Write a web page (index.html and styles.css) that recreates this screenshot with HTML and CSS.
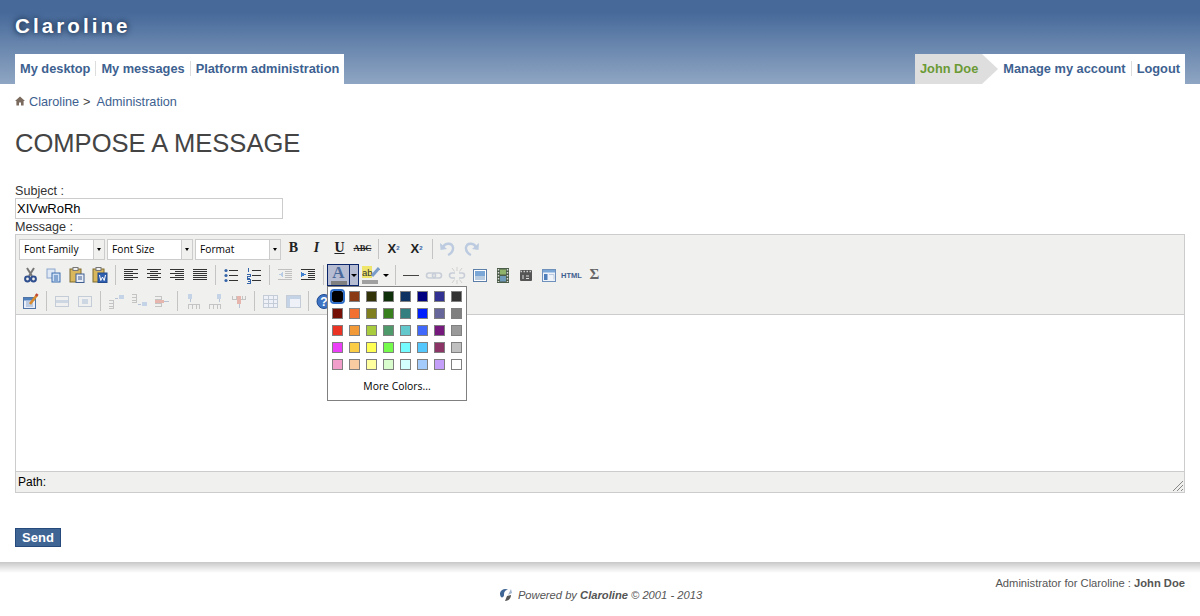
FILE: index.html
```html
<!DOCTYPE html>
<html>
<head>
    <title>Compose a message</title>
    <link rel="stylesheet" href="styles.css">
</head>
<body>
    <div class="header">
        <div class="site-title">Claroline</div>
        <div class="nav">
            <div class="nav-box">
                <a href="#">My desktop</a>
                <a href="#">My messages</a>
                <a href="#">Platform administration</a>
            </div>
            <div class="nav-box user-box">
                <span class="user-name">John Doe</span>
                <a href="#" class="plain">Manage my account</a>
                <a href="#">Logout</a>
            </div>
        </div>
    </div>

    <div class="breadcrumb">
        <svg class="home" width="10" height="10" viewBox="0 0 10 10"><path d="M5 0.5 L10 5 L8.6 5 L8.6 9.5 L6 9.5 L6 6.5 L4 6.5 L4 9.5 L1.4 9.5 L1.4 5 L0 5 Z" fill="#7b6a5e"/></svg>
        <a href="#">Claroline</a><span class="crumb-sep">&gt;</span><a href="#">Administration</a>
    </div>

    <h1>COMPOSE A MESSAGE</h1>

    <form class="message-form">
        <label class="field-label">Subject :</label>
        <input class="subject" type="text" value="XIVwRoRh">
        <label class="field-label">Message :</label>

        <div class="editor">
            <div class="toolbar">
                <div class="row">
                    <div class="select">Font Family<span class="arrow"></span></div>
                    <div class="select">Font Size<span class="arrow"></span></div>
                    <div class="select select-last">Format<span class="arrow"></span></div>
                    <span class="btn txt bold">B</span>
                    <span class="btn txt italic">I</span>
                    <span class="btn txt under">U</span>
                    <span class="btn txt strike">ABC</span>
                    <span class="sep"></span>
                    <span class="btn txt script">X<sub>2</sub></span>
                    <span class="btn txt script">X<sup>2</sup></span>
                    <span class="sep"></span>
                    <span class="btn"><svg width="20" height="20" viewBox="0 0 20 20"><path d="M5 9 C6 4 14 3 15 8.5 C15.5 12 12.5 15 10 16" fill="none" stroke="#bccbe0" stroke-width="2.4"/><path d="M2 4 L2.5 11 L9 10 Z" fill="#bccbe0"/></svg></span>
                    <span class="btn"><svg width="20" height="20" viewBox="0 0 20 20"><path d="M15 9 C14 4 6 3 5 8.5 C4.5 12 7.5 15 10 16" fill="none" stroke="#bccbe0" stroke-width="2.4"/><path d="M18 4 L17.5 11 L11 10 Z" fill="#bccbe0"/></svg></span>
                </div>

                <div class="row">
                    <span class="btn"><svg width="20" height="20" viewBox="0 0 20 20"><path d="M6 3 L11 11 M13 3 L8 11" stroke="#777" stroke-width="2" fill="none"/><circle cx="6.5" cy="14" r="2.4" fill="none" stroke="#2f4f8f" stroke-width="2"/><circle cx="12.5" cy="14" r="2.4" fill="none" stroke="#2f4f8f" stroke-width="2"/></svg></span>
                    <span class="btn"><svg width="20" height="20" viewBox="0 0 20 20"><rect x="3" y="4" width="8" height="9" fill="#dfe8f5" stroke="#8ba6cc"/><rect x="8" y="8" width="8" height="9" fill="#cfe0f5" stroke="#3f6fb0"/><path d="M10 11 H14 M10 13 H14 M10 15 H14" stroke="#3f6fb0"/></svg></span>
                    <span class="btn"><svg width="20" height="20" viewBox="0 0 20 20"><rect x="3" y="4" width="11" height="13" fill="#d9b75c" stroke="#7d6a30"/><rect x="6" y="2.5" width="5" height="3" fill="#eee" stroke="#777"/><rect x="9" y="9" width="8" height="8.5" fill="#e8edf5" stroke="#3f5f90"/><path d="M11 12 H15 M11 14 H15" stroke="#3f5f90"/></svg></span>
                    <span class="btn"><svg width="20" height="20" viewBox="0 0 20 20"><rect x="3" y="4" width="11" height="13" fill="#d9b75c" stroke="#7d6a30"/><rect x="6" y="2.5" width="5" height="3" fill="#eee" stroke="#777"/><rect x="8" y="8" width="9" height="9.5" fill="#2f5fb0" stroke="#234a8c"/><path d="M9.5 10 L10.8 15.5 L12.5 12 L14.2 15.5 L15.5 10" fill="none" stroke="#fff"/></svg></span>
                    <span class="sep"></span>
                    <span class="btn"><svg class="crisp" width="20" height="20" viewBox="0 0 20 20"><path d="M3 4.5 H17 M3 6.5 H12 M3 8.5 H17 M3 10.5 H12 M3 12.5 H17 M3 14.5 H12" stroke="#333"/></svg></span>
                    <span class="btn"><svg class="crisp" width="20" height="20" viewBox="0 0 20 20"><path d="M3 4.5 H17 M6 6.5 H14 M3 8.5 H17 M6 10.5 H14 M3 12.5 H17 M6 14.5 H14" stroke="#333"/></svg></span>
                    <span class="btn"><svg class="crisp" width="20" height="20" viewBox="0 0 20 20"><path d="M3 4.5 H17 M8 6.5 H17 M3 8.5 H17 M8 10.5 H17 M3 12.5 H17 M8 14.5 H17" stroke="#333"/></svg></span>
                    <span class="btn"><svg class="crisp" width="20" height="20" viewBox="0 0 20 20"><path d="M3 4.5 H17 M3 6.5 H17 M3 8.5 H17 M3 10.5 H17 M3 12.5 H17 M3 14.5 H17" stroke="#333"/></svg></span>
                    <span class="sep"></span>
                    <span class="btn"><svg width="20" height="20" viewBox="0 0 20 20"><path class="crisp" d="M8 5.5 H17 M8 10.5 H17 M8 15.5 H17" stroke="#333"/><circle cx="5" cy="5.5" r="1.6" fill="#3565a8"/><circle cx="5" cy="10.5" r="1.6" fill="#3565a8"/><circle cx="5" cy="15.5" r="1.6" fill="#3565a8"/></svg></span>
                    <span class="btn"><svg width="20" height="20" viewBox="0 0 20 20"><path class="crisp" d="M8 5.5 H17 M8 10.5 H17 M8 15.5 H17" stroke="#333"/><path class="crisp" d="M4 3 V7 M3 9 H6 V11 H3 V13 H6 M3 14.5 H6 V18 H3 M4 16 H6" stroke="#3565a8" fill="none"/></svg></span>
                    <span class="sep"></span>
                    <span class="btn"><svg class="crisp" width="20" height="20" viewBox="0 0 20 20"><path d="M3 4.5 H17 M10 6.5 H17 M10 8.5 H17 M10 10.5 H17 M10 12.5 H17 M3 14.5 H17" stroke="#c0c0c0"/><path d="M8 7 L4 9.5 L8 12 Z" fill="#b8cbe5"/></svg></span>
                    <span class="btn"><svg class="crisp" width="20" height="20" viewBox="0 0 20 20"><path d="M3 4.5 H17 M10 6.5 H17 M10 8.5 H17 M10 10.5 H17 M10 12.5 H17 M3 14.5 H17" stroke="#333"/><path d="M3 7 L8 9.5 L3 12 Z" fill="#3f7fd0"/></svg></span>
                    <span class="sep"></span>
                    <span class="color-split">
                        <span class="color-main"><span class="color-a">A</span><span class="color-bar"></span></span>
                        <span class="color-drop"><span class="arrow-dark"></span></span>
                    </span>
                    <span class="hilite">
                        <span class="hilite-main">
                            <svg width="18" height="14" viewBox="0 0 18 14"><rect x="0" y="0" width="10" height="12" fill="#efe56a"/><text x="0" y="9.5" class="svg-ab">ab</text><path d="M10 10 L17 2" stroke="#7a9cc9" stroke-width="3"/></svg>
                            <span class="hilite-bar"></span>
                        </span>
                        <span class="arrow-dark"></span>
                    </span>
                    <span class="sep"></span>
                    <span class="btn"><svg class="crisp" width="20" height="20" viewBox="0 0 20 20"><path d="M2 10.5 H18" stroke="#444"/></svg></span>
                    <span class="btn"><svg width="20" height="20" viewBox="0 0 20 20"><rect x="2.5" y="8" width="9" height="5" rx="2.5" fill="none" stroke="#c8ced8" stroke-width="1.6"/><rect x="8.5" y="8" width="9" height="5" rx="2.5" fill="none" stroke="#c8ced8" stroke-width="1.6"/></svg></span>
                    <span class="btn"><svg width="20" height="20" viewBox="0 0 20 20"><path d="M8 8 L5 8 A2.5 2.5 0 0 0 5 13 L8 13 M12 8 L15 8 A2.5 2.5 0 0 1 15 13 L12 13" fill="none" stroke="#c8ced8" stroke-width="1.6"/><path d="M10 2 V6 M10 15 V19 M5 3 L7.5 6.5 M15 3 L12.5 6.5 M5 18 L7.5 14.5 M15 18 L12.5 14.5" stroke="#d0d0d0"/></svg></span>
                    <span class="btn"><svg width="20" height="20" viewBox="0 0 20 20"><rect x="3.5" y="4.5" width="13" height="12" fill="#fff" stroke="#5c7ea8"/><rect x="5" y="6" width="10" height="9" fill="#7ba7d6"/><rect x="5" y="11" width="10" height="4" fill="#b7cbe0"/></svg></span>
                    <span class="btn"><svg width="20" height="20" viewBox="0 0 20 20"><rect x="4" y="3" width="12" height="15" fill="#4c5d4a"/><rect x="7" y="4.5" width="6" height="5" fill="#8fb36a"/><rect x="7" y="11" width="6" height="5.5" fill="#6f9bb8"/><path d="M5.5 4 V17 M14.5 4 V17" stroke="#ddd" stroke-width="1.4" stroke-dasharray="1.5 1.5"/></svg></span>
                    <span class="btn"><svg width="20" height="20" viewBox="0 0 20 20"><rect x="4" y="5" width="12" height="11" rx="1" fill="#555"/><path d="M4.5 6.5 H15.5" stroke="#ccc" stroke-dasharray="1.5 1.5" stroke-width="1.5"/><path d="M7 10 V14 M10 11 H13 M10 13.5 H13" stroke="#ddd"/></svg></span>
                    <span class="btn"><svg width="20" height="20" viewBox="0 0 20 20"><rect x="3.5" y="4.5" width="13" height="12" fill="#eef3fa" stroke="#6f90ba"/><rect x="4" y="5" width="12" height="2.5" fill="#7ba7d6"/><rect x="5" y="9" width="3.5" height="6" fill="#4f7fbb"/><path d="M10 9.5 H15 V14.5" stroke="#b9c9df" fill="none"/></svg></span>
                    <span class="btn txt html">HTML</span>
                    <span class="btn txt sigma">Σ</span>
                </div>

                <div class="row">
                    <span class="btn"><svg width="20" height="20" viewBox="0 0 20 20"><rect x="2.5" y="6.5" width="12" height="11" fill="#e8eef7" stroke="#4f74a5"/><rect x="3" y="7" width="11" height="2.5" fill="#4f7fbb"/><path d="M5 11 H12 M5 13 H12 M5 15 H12" stroke="#8ba6cc"/><path d="M9 13 L16 4" stroke="#d98a2b" stroke-width="2.6"/><path d="M15 5 L16.5 3" stroke="#c04a3a" stroke-width="2.6"/></svg></span>
                    <span class="sep"></span>
                    <span class="btn"><svg width="20" height="20" viewBox="0 0 20 20"><rect x="3.5" y="5.5" width="13" height="10" fill="#f0f0f0" stroke="#c4ccd8"/><rect x="4" y="9" width="12" height="3" fill="#cdd6e3"/></svg></span>
                    <span class="btn"><svg width="20" height="20" viewBox="0 0 20 20"><rect x="3.5" y="5.5" width="13" height="10" fill="#f0f0f0" stroke="#c4ccd8"/><rect x="7" y="8" width="6" height="5" fill="#cdd6e3"/></svg></span>
                    <span class="sep"></span>
                    <span class="btn"><svg class="crisp" width="20" height="20" viewBox="0 0 20 20"><path d="M3 9.5 H7 V17.5 H3 M3 12.5 H7 M3 15 H7" fill="none" stroke="#c4c4c4"/><path d="M9 7 H12" stroke="#b8c4d6"/><rect x="13" y="4" width="5" height="4" fill="#c5d3e6"/></svg></span>
                    <span class="btn"><svg class="crisp" width="20" height="20" viewBox="0 0 20 20"><path d="M3 3.5 H7 V11.5 H3 M3 6.5 H7 M3 9 H7" fill="none" stroke="#c4c4c4"/><path d="M9 13 H12" stroke="#b8c4d6"/><rect x="13" y="11" width="5" height="4" fill="#c5d3e6"/></svg></span>
                    <span class="btn"><svg class="crisp" width="20" height="20" viewBox="0 0 20 20"><path d="M3 5.5 H9 V15.5 H3 M3 8.5 H9 M3 12.5 H9" fill="none" stroke="#c4c4c4"/><rect x="3" y="9" width="9" height="3" fill="#e6b5ad"/><path d="M12 10.5 H17" stroke="#b8c4d6"/></svg></span>
                    <span class="sep"></span>
                    <span class="btn"><svg class="crisp" width="20" height="20" viewBox="0 0 20 20"><rect x="5" y="3" width="4" height="5" fill="#c5d3e6"/><path d="M7 8 V11" stroke="#b8c4d6"/><path d="M5.5 17.5 V13.5 H16.5 V17.5 M9 13.5 V17.5 M13 13.5 V17.5" fill="none" stroke="#c4c4c4"/></svg></span>
                    <span class="btn"><svg class="crisp" width="20" height="20" viewBox="0 0 20 20"><rect x="11" y="3" width="4" height="5" fill="#c5d3e6"/><path d="M13 8 V11" stroke="#b8c4d6"/><path d="M3.5 17.5 V13.5 H14.5 V17.5 M7 13.5 V17.5 M11 13.5 V17.5" fill="none" stroke="#c4c4c4"/></svg></span>
                    <span class="btn"><svg class="crisp" width="20" height="20" viewBox="0 0 20 20"><path d="M3.5 4.5 V8.5 H16.5 V4.5 M7 4.5 V8.5 M13 4.5 V8.5" fill="none" stroke="#c4c4c4"/><rect x="8" y="5" width="4" height="8" fill="#e6b5ad"/><path d="M10 13 V17" stroke="#b8c4d6"/></svg></span>
                    <span class="sep"></span>
                    <span class="btn"><svg class="crisp" width="20" height="20" viewBox="0 0 20 20"><rect x="3.5" y="4.5" width="14" height="12" fill="#eef2f8" stroke="#c4ccd8"/><path d="M3.5 8.5 H17.5 M3.5 12.5 H17.5 M8 4.5 V16.5 M13 4.5 V16.5" stroke="#c4ccd8"/></svg></span>
                    <span class="btn"><svg class="crisp" width="20" height="20" viewBox="0 0 20 20"><rect x="3.5" y="4.5" width="14" height="12" fill="#eef2f8" stroke="#c4ccd8"/><rect x="4" y="5" width="13" height="3" fill="#c5d3e6"/><rect x="4" y="5" width="3" height="11" fill="#c5d3e6"/></svg></span>
                    <span class="sep"></span>
                    <span class="btn"><svg width="20" height="20" viewBox="0 0 20 20"><circle cx="10" cy="10.5" r="7" fill="#3f74c4" stroke="#1f4a90"/><text x="10" y="14.5" class="svg-help">?</text></svg></span>
                </div>
            </div>

            <div class="content"></div>

            <div class="statusbar">
                <span>Path:</span>
                <svg class="grip" width="12" height="12" viewBox="0 0 12 12"><path d="M1 11 L11 1 M5 11 L11 5 M9 11 L11 9" stroke="#888"/></svg>
            </div>

            <div class="color-menu">
                <div class="swatches">
                    <span class="swatch picked sw-000000"></span>
                    <span class="swatch sw-993300"></span>
                    <span class="swatch sw-333300"></span>
                    <span class="swatch sw-003300"></span>
                    <span class="swatch sw-003366"></span>
                    <span class="swatch sw-000080"></span>
                    <span class="swatch sw-333399"></span>
                    <span class="swatch sw-333333"></span>
                    <span class="swatch sw-800000"></span>
                    <span class="swatch sw-ff6600"></span>
                    <span class="swatch sw-808000"></span>
                    <span class="swatch sw-008000"></span>
                    <span class="swatch sw-008080"></span>
                    <span class="swatch sw-0000ff"></span>
                    <span class="swatch sw-666699"></span>
                    <span class="swatch sw-808080"></span>
                    <span class="swatch sw-ff0000"></span>
                    <span class="swatch sw-ff9900"></span>
                    <span class="swatch sw-99cc00"></span>
                    <span class="swatch sw-339966"></span>
                    <span class="swatch sw-33cccc"></span>
                    <span class="swatch sw-3366ff"></span>
                    <span class="swatch sw-800080"></span>
                    <span class="swatch sw-999999"></span>
                    <span class="swatch sw-ff00ff"></span>
                    <span class="swatch sw-ffcc00"></span>
                    <span class="swatch sw-ffff00"></span>
                    <span class="swatch sw-00ff00"></span>
                    <span class="swatch sw-00ffff"></span>
                    <span class="swatch sw-00ccff"></span>
                    <span class="swatch sw-993366"></span>
                    <span class="swatch sw-c0c0c0"></span>
                    <span class="swatch sw-ff99cc"></span>
                    <span class="swatch sw-ffcc99"></span>
                    <span class="swatch sw-ffff99"></span>
                    <span class="swatch sw-ccffcc"></span>
                    <span class="swatch sw-ccffff"></span>
                    <span class="swatch sw-99ccff"></span>
                    <span class="swatch sw-cc99ff"></span>
                    <span class="swatch sw-ffffff"></span>
                </div>
                <div class="more-colors">More Colors...</div>
            </div>
        </div>

        <button class="send" type="button">Send</button>
    </form>

    <div class="footer">
        <div class="footer-admin">Administrator for Claroline : <b>John Doe</b></div>
        <div class="footer-powered">
            <svg width="16" height="14" viewBox="0 0 16 14"><path d="M2 5 C3 1 8 0 10 2 C7 2 6 4 6 7 C6 9 4 10 3 9 C2 8 2 6 2 5 Z" fill="#3f6595"/><path d="M13 1 L14 5 L10 7 L12 3 Z" fill="#9fb2cc"/><path d="M7 13 L9 8 L13 7 C13 10 11 13 7 13 Z" fill="#555"/></svg>
            <span>Powered by <b>Claroline</b> © 2001 - 2013</span>
        </div>
    </div>
</body>
</html>
```
FILE: styles.css
```css
body {
    margin: 0;
    font-family: 'Liberation Sans', sans-serif;
    font-size: 12px;
    color: #333;
    background: white;
}

a {
    color: #3d6190;
    text-decoration: none;
}

.header {
    height: 84px;
    background: linear-gradient(#46699a 0, #46699a 12px, #8fa6c3 84px);
    display: flex;
    flex-direction: column;
}

.site-title {
    height: 54px;
    box-sizing: border-box;
    padding: 14px 0 0 15px;
    font-size: 20.5px;
    line-height: 23px;
    font-weight: bold;
    letter-spacing: 3.1px;
    color: white;
    text-shadow: 0 0 5px #223a5a, 0 0 7px #223a5a;
}

.nav {
    display: flex;
    justify-content: space-between;
    padding: 0 15px;
}

.nav-box {
    height: 30px;
    background: white;
    display: flex;
    align-items: center;
    font-size: 12.8px;
    font-weight: bold;
}

.nav-box a {
    padding: 0 5px;
    margin-top: -2px;
    line-height: 15px;
    border-left: 1px solid #ddd;
}

.nav-box a:first-child,
.nav-box a.plain {
    border-left: none;
}

.user-name {
    height: 30px;
    line-height: 29px;
    padding-left: 5px;
    padding-right: 4px;
    background: #dedede;
    color: #6b9a35;
    position: relative;
    margin-right: 16px;
}

/* arrow on the grey name tab */
.user-name::after {
    content: "";
    position: absolute;
    left: 100%;
    top: 0;
    border-left: 16px solid #dedede;
    border-top: 15px solid transparent;
    border-bottom: 15px solid transparent;
}

.breadcrumb {
    display: flex;
    align-items: center;
    height: 14px;
    margin: 11px 0 0 15px;
    font-size: 12.7px;
    color: #444;
}

.home {
    margin: -2px 4px 0 0;
}

.crumb-sep {
    margin: 0 6px 0 4px;
}

h1 {
    margin: 19px 0 0 15px;
    font-size: 25.55px;
    line-height: 30px;
    font-weight: normal;
    color: #444;
}

.message-form {
    margin: 26px 15px 0;
}

.field-label {
    display: block;
    font-size: 12.6px;
    line-height: 14px;
    color: #333;
}

.subject {
    display: block;
    width: 268px;
    height: 21px;
    box-sizing: border-box;
    border: 1px solid #ccc;
    padding: 0 1px;
    font-family: 'Liberation Sans', sans-serif;
    font-size: 13px;
    color: #000;
    margin-bottom: 1px;
}

.editor {
    position: relative;
    border: 1px solid #ccc;
    background: #f0f0ee;
}

.toolbar {
    padding: 3px 0 2px 3px;
    border-bottom: 1px solid #ccc;
    height: 74px;
    display: flex;
    flex-direction: column;
    gap: 4px;
}

.row {
    display: flex;
    align-items: center;
    height: 22px;
}

.select {
    width: 86px;
    height: 21px;
    box-sizing: border-box;
    margin-right: 2px;
    padding-left: 4px;
    background: white;
    border: 1px solid #ccc;
    font-family: 'Open Sans', sans-serif;
    font-size: 10.2px;
    line-height: 19px;
    color: #000;
    position: relative;
}

.select-last {
    margin-right: 1px;
}

.arrow {
    position: absolute;
    right: 0;
    top: 0;
    width: 10px;
    height: 19px;
    background: #f0f0ee;
    border-left: 1px solid #ccc;
}

.arrow::after {
    content: "";
    position: absolute;
    left: 3px;
    top: 8px;
    border-top: 3px solid #000;
    border-left: 2px solid transparent;
    border-right: 2px solid transparent;
}

.btn {
    width: 23px;
    height: 22px;
    display: flex;
    align-items: center;
    justify-content: center;
    flex-shrink: 0;
}

.crisp {
    shape-rendering: crispEdges;
}

.sep {
    width: 8px;
    height: 20px;
    flex-shrink: 0;
    display: block;
    background: linear-gradient(#c4c4c4, #c4c4c4) center / 1px 100% no-repeat;
}

.txt {
    color: #222;
    font-family: 'Liberation Serif', serif;
    font-weight: bold;
    padding-bottom: 2px;
    box-sizing: border-box;
}

.bold { font-size: 14px; }
.italic { font-size: 14px; font-style: italic; }
.under { font-size: 14px; text-decoration: underline; }
.strike { font-size: 8.5px; text-decoration: line-through; }

.script {
    font-family: 'Liberation Sans', sans-serif;
    font-size: 13px;
}

.script sub,
.script sup {
    font-size: 6px;
    color: #3565a8;
    line-height: 0;
}

.script sub {
    vertical-align: -3px;
}

.script sup {
    vertical-align: 5px;
}

.html {
    font-family: 'Liberation Sans', sans-serif;
    font-size: 7.5px;
    color: #3f5f90;
    padding-bottom: 0;
}

.sigma {
    font-size: 15px;
    color: #666;
}

.color-split {
    width: 32px;
    height: 22px;
    box-sizing: border-box;
    border: 1px solid #0a246a;
    background: #b6bdd2;
    display: flex;
    flex-shrink: 0;
}

.color-main {
    width: 21px;
    display: flex;
    flex-direction: column;
    align-items: center;
    border-right: 1px solid #0a246a;
}

.color-a {
    font-family: 'Liberation Serif', serif;
    font-weight: bold;
    font-size: 17px;
    line-height: 15px;
    color: #4a6a9c;
}

.color-bar {
    width: 16px;
    height: 4px;
    margin-top: 1px;
    background: #808080;
}

.color-drop {
    flex: 1;
    display: flex;
    align-items: center;
    justify-content: center;
}

.arrow-dark {
    display: block;
    width: 0;
    border-top: 3px solid #000;
    border-left: 3px solid transparent;
    border-right: 3px solid transparent;
}

.hilite {
    width: 28px;
    height: 22px;
    display: flex;
    align-items: center;
    flex-shrink: 0;
    margin-left: 2px;
    margin-right: 2px;
    gap: 3px;
}

.hilite-main {
    display: flex;
    flex-direction: column;
    width: 18px;
    margin-left: 1px;
}

.hilite-bar {
    width: 16px;
    height: 4px;
    background: #a0a0a0;
}

.svg-ab {
    font-family: 'Liberation Sans', sans-serif;
    font-size: 9.5px;
    fill: #333;
}

.svg-help {
    font-family: 'Liberation Sans', sans-serif;
    font-size: 12px;
    font-weight: bold;
    text-anchor: middle;
    fill: white;
}

.content {
    height: 156px;
    background: white;
    border-bottom: 1px solid #ccc;
}

.statusbar {
    height: 20px;
    line-height: 20px;
    padding-left: 2px;
    font-size: 12px;
    color: #000;
    position: relative;
}

.grip {
    position: absolute;
    right: 0;
    bottom: 0;
}

.color-menu {
    position: absolute;
    left: 311px;
    top: 51px;
    width: 140px;
    height: 115px;
    box-sizing: border-box;
    background: white;
    border: 1px solid #808080;
}

.swatches {
    display: grid;
    grid-template-columns: repeat(8, 11px);
    grid-auto-rows: 11px;
    gap: 6px;
    padding: 4px 0 0 4px;
}

.swatch {
    box-sizing: border-box;
    border: 1px solid #808080;
}

.swatch.picked {
    outline: 2px solid #2f6fc9;
    border-color: #000;
    border-radius: 2px;
}

.sw-000000 { background: #000000; }
.sw-993300 { background: #8a3a14; }
.sw-333300 { background: #333309; }
.sw-003300 { background: #0f300a; }
.sw-003366 { background: #0e3362; }
.sw-000080 { background: #000080; }
.sw-333399 { background: #323293; }
.sw-333333 { background: #333333; }
.sw-800000 { background: #751006; }
.sw-ff6600 { background: #f37130; }
.sw-808000 { background: #7f7f1f; }
.sw-008000 { background: #387f1e; }
.sw-008080 { background: #337f7f; }
.sw-0000ff { background: #001fff; }
.sw-666699 { background: #66669a; }
.sw-808080 { background: #808080; }
.sw-ff0000 { background: #ea3323; }
.sw-ff9900 { background: #f39a38; }
.sw-99cc00 { background: #a8cc3e; }
.sw-339966 { background: #4f9a6a; }
.sw-33cccc { background: #63c8cb; }
.sw-3366ff { background: #4068fb; }
.sw-800080 { background: #751a7c; }
.sw-999999 { background: #999999; }
.sw-ff00ff { background: #ea3ff7; }
.sw-ffcc00 { background: #fbcd46; }
.sw-ffff00 { background: #ffff54; }
.sw-00ff00 { background: #75fb4c; }
.sw-00ffff { background: #75fbfd; }
.sw-00ccff { background: #54c7fc; }
.sw-993366 { background: #8a3566; }
.sw-c0c0c0 { background: #c0c0c0; }
.sw-ff99cc { background: #f19ecb; }
.sw-ffcc99 { background: #f8cba0; }
.sw-ffff99 { background: #ffff9f; }
.sw-ccffcc { background: #d9fdcc; }
.sw-ccffff { background: #d4ffff; }
.sw-99ccff { background: #a3cbfb; }
.sw-cc99ff { background: #c49ff9; }
.sw-ffffff { background: #ffffff; }

.more-colors {
    margin-top: 9px;
    text-align: center;
    font-family: 'Open Sans', sans-serif;
    font-size: 10.4px;
    line-height: 14px;
    color: #000;
}

.send {
    display: block;
    margin-top: 35px;
    width: 46px;
    height: 19px;
    padding: 0;
    border: 1px solid #274a7c;
    background: #3f6595;
    color: white;
    font-family: 'Liberation Sans', sans-serif;
    font-size: 13px;
    font-weight: bold;
}

.footer {
    margin-top: 15px;
    height: 54px;
    background: linear-gradient(#c8c8c8, white 11px);
    padding: 15px 15px 0;
    box-sizing: border-box;
    font-size: 11.2px;
    color: #555;
}

.footer-admin {
    text-align: right;
    line-height: 13px;
}

.footer-powered {
    display: flex;
    justify-content: center;
    align-items: center;
    gap: 4px;
    font-style: italic;
    line-height: 13px;
    margin-top: -2px;
}
```
